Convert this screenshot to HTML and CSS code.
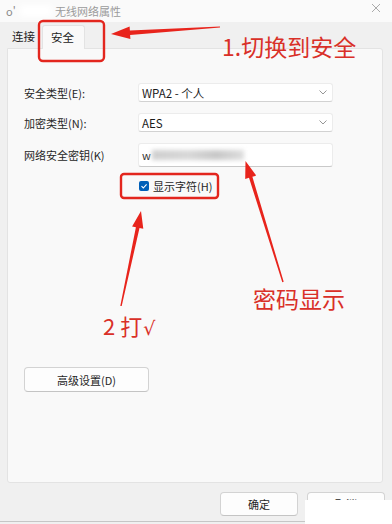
FILE: index.html
```html
<!DOCTYPE html>
<html lang="zh">
<head>
<meta charset="utf-8">
<link rel="stylesheet" href="styles.css">
</head>
<body>
<div class="window">
  <div class="titlebar">
    <span class="app">o'</span>
    <span class="smudge"></span>
    <span class="title">无线网络属性</span>
    <svg class="close" width="10" height="10" viewBox="0 0 10 10"><path d="M1 1L9 9M9 1L1 9" stroke="#a0a0a0" stroke-width="0.9" fill="none"/></svg>
  </div>
  <div class="tabs">
    <div class="tab">连接</div>
    <div class="tab active">安全</div>
  </div>
  <div class="panel">
    <div class="form">
      <div class="label">安全类型(E):</div>
      <div class="select"><span>WPA2 - 个人</span><svg width="8" height="5" viewBox="0 0 8 5"><path d="M0.5 0.5L4 4L7.5 0.5" stroke="#8a8a8a" stroke-width="0.9" fill="none"/></svg></div>
      <div class="label">加密类型(N):</div>
      <div class="select"><span>AES</span><svg width="8" height="5" viewBox="0 0 8 5"><path d="M0.5 0.5L4 4L7.5 0.5" stroke="#8a8a8a" stroke-width="0.9" fill="none"/></svg></div>
      <div class="label">网络安全密钥(K)</div>
      <div class="input"><span class="w">w</span><span class="blurred"></span></div>
    </div>
    <div class="check">
      <span class="box"><svg width="8" height="8" viewBox="0 0 8 8"><path d="M1.5 4.2L3.3 6L6.6 2.3" stroke="#fff" stroke-width="1.1" fill="none"/></svg></span>
      <span class="check-label">显示字符(H)</span>
    </div>
    <div class="btn adv">高级设置(D)</div>
  </div>
  <div class="footer">
    <div class="btn small">确定</div>
    <div class="btn small">取消</div>
  </div>
  <div class="cover"></div>

  <svg class="marks" width="392" height="524" viewBox="0 0 392 524">
    <rect x="39" y="21" width="65" height="40" rx="4" fill="none" stroke="#e3261e" stroke-width="2.4"/>
    <rect x="121" y="174" width="97" height="24" rx="3" fill="none" stroke="#e3261e" stroke-width="2.4"/>
    <polygon fill="#e8241c" points="220,26.4 129.9,30.6 129.6,26.6 111,34 130.4,39 130.1,35 220,27.6"/>
    <polygon fill="#e8241c" points="121.7,306.1 139.5,228 143.3,228.8 141,211 132.1,226.4 135.9,227.2 120.3,305.9"/>
    <polygon fill="#e8241c" points="283.7,281.8 252.4,176.8 256.2,175.6 245.5,161 245.2,179 249,177.8 282.3,282.2"/>
  </svg>
  <div class="note n1">1.切换到安全</div>
  <div class="note n2">密码显示</div>
  <div class="note n3">2 打<span class="tick">√</span></div>
</div>
</body>
</html>
```
FILE: styles.css
```css
* { box-sizing: border-box; }
html, body { margin: 0; padding: 0; }
body { width: 392px; height: 524px; overflow: hidden; }

.window {
  position: relative;
  width: 392px;
  height: 524px;
  background: #f0f0f0;
  overflow: hidden;
  font-family: "Noto Sans CJK SC", "Noto Sans", sans-serif;
  color: #1f1f1f;
}

.titlebar {
  height: 22px;
  background: #fafafa;
  display: flex;
  align-items: center;
  padding-left: 6px;
  font-size: 11px;
  color: #9a9a9a;
}
.app { width: 14px; color: #8a8a8a; }
.smudge {
  width: 32px; height: 12px;
  background: #ffffff;
  filter: blur(3px);
  margin-right: 3px;
}
.title { flex: 1; }
.close { margin-right: 11px; margin-bottom: 6px; }

.tabs {
  height: 26px;
  display: flex;
  align-items: flex-end;
  padding-left: 7px;
  font-size: 11.5px;
}
.tab {
  height: 22px;
  line-height: 20px;
  width: 35px;
  padding-left: 5px;
  color: #222;
}
.tab.active {
  position: relative;
  z-index: 1;
  width: 43px;
  height: 24px;
  margin-bottom: -1px;
  padding-left: 8px;
  line-height: 22px;
  background: #f9f9f9;
  border: 1px solid #e3e3e3;
  border-bottom: none;
  border-radius: 3px 3px 0 0;
}

.panel {
  height: 435px;
  margin: 0 9px 0 7px;
  background: #f9f9f9;
  border: 1px solid #e3e3e3;
  border-radius: 0 3px 3px 3px;
  padding: 34px 0 0 16px;
}

.form {
  display: grid;
  grid-template-columns: 114px 195px;
  grid-template-rows: 19px 19px 24px;
  row-gap: 11px;
  font-size: 11px;
}
.label { display: flex; align-items: center; color: #262626; }
.select {
  display: flex;
  align-items: center;
  justify-content: space-between;
  padding: 0 5px 0 3px;
  background: #ffffff;
  border: 1px solid #ececec;
  border-bottom-color: #d2d2d2;
  border-radius: 3px;
  font-size: 11.5px;
  color: #1a1a1a;
}
.input {
  display: flex;
  align-items: center;
  padding-left: 3px;
  background: #ffffff;
  border: 1px solid #ececec;
  border-bottom: 1px solid #c9c9c9;
  border-radius: 3px;
  font-size: 11px;
}
.w { color: #333; }
.blurred {
  width: 92px;
  height: 10px;
  margin-left: 1px;
  background: linear-gradient(90deg, #cfcfcf, #d8d8d8 40%, #c8c8c8 70%, #dedede);
  filter: blur(2px);
}

.check {
  display: flex;
  align-items: center;
  height: 16px;
  margin: 11px 0 0 115px;
  font-size: 11px;
}
.box {
  width: 10px; height: 10px;
  background: #005fb8;
  border-radius: 2px;
  display: flex;
  align-items: center;
  justify-content: center;
}
.check-label { margin-left: 4px; color: #1f1f1f; }

.btn {
  display: flex;
  align-items: center;
  justify-content: center;
  background: #fdfdfd;
  border: 1px solid #d3d3d3;
  border-bottom-color: #c4c4c4;
  border-radius: 4px;
  font-size: 11px;
  color: #1f1f1f;
}
.adv {
  width: 125px;
  height: 25px;
  margin-top: 173px;
}

.footer {
  height: 39px;
  display: flex;
  justify-content: flex-end;
  align-items: flex-start;
  gap: 9px;
  padding: 9px 7px 0 0;
  border-bottom: 1px solid #c6c6c6;
}
.small { width: 78px; height: 24px; }

.cover {
  position: absolute;
  left: 305px; top: 500px;
  width: 87px; height: 24px;
  background: #ffffff;
}

.marks { position: absolute; left: 0; top: 0; }

.note {
  position: absolute;
  color: #d93028;
  line-height: 28px;
  white-space: nowrap;
}
.n1 { left: 222px; top: 32px; font-size: 23px; }
.n2 { left: 253px; top: 284px; font-size: 23px; }
.n3 { left: 103px; top: 311px; font-size: 22px; }
.tick { font-family: "DejaVu Sans", sans-serif; font-size: 19px; margin-left: 1px; }
```
